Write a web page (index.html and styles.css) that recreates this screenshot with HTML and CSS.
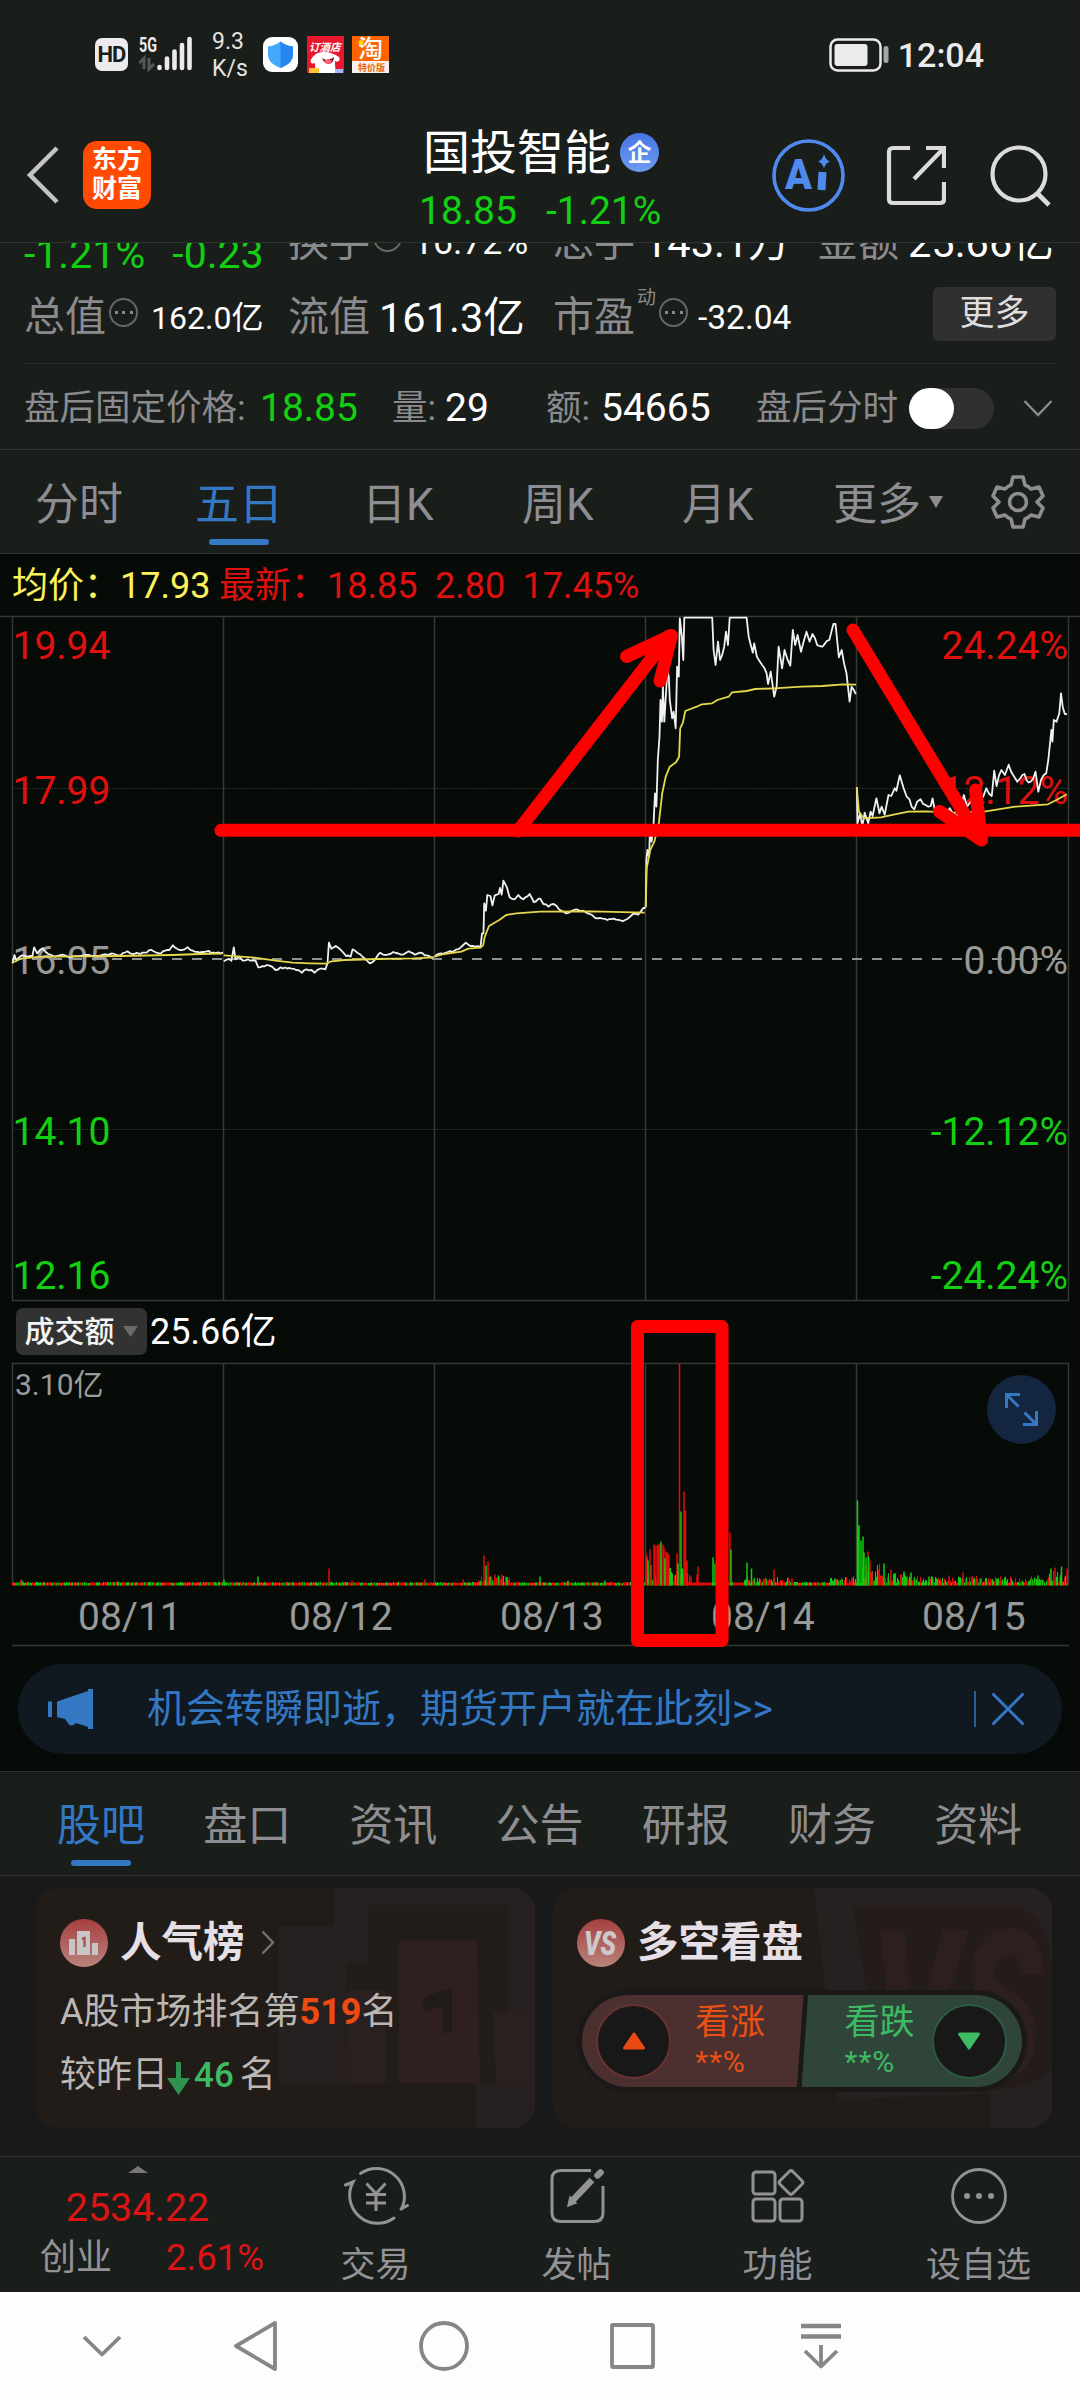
FILE: index.html
```html
<!DOCTYPE html>
<html lang="zh-CN">
<head>
<meta charset="utf-8">
<title>国投智能</title>
<link rel="stylesheet" href="styles.css">
</head>
<body>
<div class="screen">

  <header class="status">
    <div class="status-left">
      <span class="hd">HD</span>
      <svg class="signal" width="54" height="36" viewBox="0 0 54 36">
        <text x="0" y="15.500" class="signal-text" textLength="18" lengthAdjust="spacingAndGlyphs">5G</text>
        <path d="M0 27l5-5v11M15 28l-5 5V22" fill="none" stroke="#555856" stroke-width="3"/>
        <path d="M20.500 32v-1M28 32V22.500M35.500 32V15.500M43 32V9M50.500 32V3" stroke="#eceaed" stroke-width="4.600" stroke-linecap="round"/>
      </svg>
      <span class="speed">9.3<br>K/s</span>
      <svg class="app-shield" width="35" height="35" viewBox="0 0 35 35">
        <rect width="35" height="35" rx="9" fill="#fff"/>
        <path d="M17.500 4.500c4 3 8 4.500 12.500 5v8c0 7-6 11-12.500 13.500C11 28.500 5 24.500 5 17.500v-8c4.500-.5 8.500-2 12.500-5z" fill="#43a9fb"/>
        <path d="M17.500 4.500c4 3 8 4.500 12.500 5v8c0 7-6 11-12.500 13.500z" fill="#2587f0"/>
      </svg>
      <svg class="app-hotel" width="37" height="37" viewBox="0 0 37 37">
        <rect width="37" height="37" fill="#e8172c"/>
        <text x="2" y="15" font-size="10.500" font-weight="700" font-style="italic" fill="#fff">订酒店</text>
        <path d="M7 37c2-5 1-7 1-10-4 2-6-2-3-5 3-4 6-6 12-6s11 2 15 5c2 3-1 6-4 4 0 5 0 8 2 12z" fill="#fff"/>
        <path d="M15 22c4 3 8 2 12-1 0 8-9 10-12 1z" fill="#8d1220"/>
        <path d="M17 25c3-2 6-2 8 0-2 4-6 4-8 0z" fill="#ff6470"/>
        <rect x="2" y="32" width="10" height="5" fill="#ffc533"/><rect x="28" y="33" width="8" height="4" fill="#a8b6ff"/>
      </svg>
      <svg class="app-tao" width="37" height="37" viewBox="0 0 37 37">
        <rect width="37" height="26" fill="#ff6400"/><rect y="25" width="37" height="12" fill="#f6f1ea"/>
        <text x="6" y="22" font-size="25" font-weight="500" fill="#fff">淘</text>
        <circle cx="9" cy="6.500" r="2.500" fill="#ffd800"/>
        <text x="6" y="34.500" font-size="9" font-weight="700" fill="#e8640f">特价版</text>
      </svg>
    </div>
    <div class="status-right">
      <svg width="60" height="34" viewBox="0 0 60 34">
        <rect x="1.500" y="1.500" width="50" height="31" rx="7" fill="none" stroke="#eceaed" stroke-width="2.500"/>
        <rect x="5.500" y="6" width="33" height="22" rx="3" fill="#eceaed"/>
        <rect x="54.500" y="8" width="5" height="17" rx="2.500" fill="#a5a6a6"/>
      </svg>
      <span class="time">12:04</span>
    </div>
  </header>

  <nav class="topbar">
    <svg class="back" width="34" height="58" viewBox="0 0 34 58"><path d="M31 2L4 29l27 27" fill="none" stroke="#c4c4c4" stroke-width="4.500"/></svg>
    <div class="brand">东方<br>财富</div>
    <div class="title">
      <div class="name">国投智能<span class="corp">企</span></div>
      <div class="quote"><span>18.85</span><span>-1.21%</span></div>
    </div>
    <div class="actions">
      <svg width="73" height="73" viewBox="0 0 73 73">
        <circle cx="36.500" cy="36.500" r="34.500" fill="none" stroke="#4f8bef" stroke-width="3.600"/>
        <text x="13" y="50" class="ai-text" textLength="27" lengthAdjust="spacingAndGlyphs">A</text>
        <path d="M50.500 33L49.500 51" stroke="#4f8bef" stroke-width="8"/>
        <path d="M52 15q1.500 6 6 7.500-4.500 1.500-6 7-1.500-5.500-6-7 4.500-1.500 6-7.500z" fill="#4f8bef"/>
      </svg>
      <svg class="share" width="60" height="62" viewBox="0 0 60 62">
        <path d="M24 3H7Q3 3 3 7v47q0 4 4 4h47q4 0 4-4V37M40 3h18v20M57 4L28 34" fill="none" stroke="#dcdcdc" stroke-width="4.200"/>
      </svg>
      <svg width="62" height="62" viewBox="0 0 62 62">
        <circle cx="29" cy="29" r="26.500" fill="none" stroke="#dcdcdc" stroke-width="4.200"/>
        <path d="M47 48l12 12" stroke="#dcdcdc" stroke-width="4.600"/>
      </svg>
    </div>
  </nav>

  <section class="stats">
    <div class="stats-clip">
      <div class="stat-row">
        <div class="stat drop"><span class="n41">-1.21%</span><span class="n41">-0.23</span></div>
        <div class="stat"><label>换手</label><i class="dots"></i><span class="n36">16.72%</span></div>
        <div class="stat wide"><label>总手</label><span class="n42">143.1万</span></div>
        <div class="stat"><label>金额</label><span class="n42">25.66亿</span></div>
      </div>
      <div class="stat-row second">
        <div class="stat"><label>总值</label><i class="dots"></i><span class="n32">162.0亿</span></div>
        <div class="stat"><label>流值</label><span class="n42">161.3亿</span></div>
        <div class="stat pe"><label>市盈</label><sup>动</sup><i class="dots"></i><span class="n33">-32.04</span></div>
        <button class="more">更多</button>
      </div>
    </div>
    <div class="after">
      <span class="lbl">盘后固定价格:</span><span class="val green">18.85</span>
      <span class="lbl">量:</span><span class="val">29</span>
      <span class="lbl">额:</span><span class="val">54665</span>
      <span class="lbl">盘后分时</span>
      <span class="toggle"><b></b></span>
      <svg width="30" height="20" viewBox="0 0 30 20"><path d="M1.500 2L15 16 28.500 2" fill="none" stroke="#8b8b8f" stroke-width="2.400"/></svg>
    </div>
  </section>

  <nav class="periods">
    <span>分时</span><span class="on">五日</span><span>日K</span><span>周K</span><span>月K</span>
    <span class="more-k">更多<i></i></span>
    <svg width="54" height="56" viewBox="-27 -28 54 56"><path d="M-5-25H5L7-17Q10-16 13-13L21-15 25-6 19 0 25 6 21 15 13 13Q10 16 7 17L5 25H-5L-7 17Q-10 16-13 13L-21 15-25 6-19 0-25-6-21-15-13-13Q-10-16-7-17Z" fill="none" stroke="#8e8e92" stroke-width="3.600" stroke-linejoin="round"/><circle r="8.500" fill="none" stroke="#8e8e92" stroke-width="3.600"/></svg>
  </nav>

  <section class="chart-area">
    <svg id="chart" width="1080" height="1096" viewBox="0 554 1080 1096">
      <g class="legend">
        <text x="12" y="598" fill="#fdf25a">均价：17.93</text>
        <text x="219" y="598" fill="#e0100f">最新：</text>
        <text x="327" y="598" fill="#e0100f">18.85</text>
        <text x="435" y="598" fill="#e0100f">2.80</text>
        <text x="522.500" y="598" fill="#e0100f">17.45%</text>
      </g>
      <g stroke="#363a37" stroke-width="1.500">
        <path d="M0 616.500H1080M12 1300.500H1069M12 1363.500H1069M12 1645.500H1069"/>
        <path d="M12.500 616V1300M223.500 616V1300M434.500 616V1300M645.500 616V1300M856.500 616V1300M1068.500 616V1300"/>
        <path d="M12.500 1363V1585M223.500 1363V1585M434.500 1363V1585M645.500 1363V1585M856.500 1363V1585M1068.500 1363V1585"/>
        <path d="M12 788.500H1069M12 1129.500H1069" stroke-width="1" stroke-dasharray="1 1.500" stroke="#444845"/>
      </g>
      <path d="M12 959H1066" stroke="#929292" stroke-width="1.800" stroke-dasharray="10 10"/>
      <g class="axis">
        <text x="12.500" y="659" class="up">19.94</text><text x="12.500" y="804" class="up">17.99</text>
        <text x="12.500" y="973.500">16.05</text>
        <text x="12.500" y="1145" class="down">14.10</text><text x="12.500" y="1289" class="down">12.16</text>
        <g text-anchor="end">
          <text x="1068" y="659" class="up">24.24%</text><text x="1068" y="804" class="up">12.12%</text>
          <text x="1068" y="973.500">0.00%</text>
          <text x="1068" y="1145" class="down">-12.12%</text><text x="1068" y="1289" class="down">-24.24%</text>
        </g>
      </g>
      <g id="lines" fill="none" stroke-linejoin="round"></g>
      <g id="volume"></g>
      <g>
        <rect x="16" y="1308" width="131" height="47" rx="7" fill="#323232"/>
        <text x="24.500" y="1342" font-size="30" font-weight="500" fill="#f4f4f4">成交额</text>
        <path d="M123 1326h15l-7.500 11z" fill="#6a6a6a"/>
        <text x="150" y="1344" font-size="36" fill="#fff">25.66亿</text>
        <text x="15" y="1395" font-size="30" fill="#9b9b9b">3.10亿</text>
      </g>
      <g class="dates">
        <text x="78" y="1630">08/11</text><text x="289" y="1630">08/12</text><text x="500" y="1630">08/13</text><text x="711" y="1630">08/14</text><text x="922" y="1630">08/15</text>
      </g>
      <circle cx="1021.500" cy="1409.500" r="34.500" fill="#13253f"/>
      <path d="M1020 1394.500H1006.500V1408M1006.500 1394.500L1018.500 1406.500M1036.500 1411V1424.500H1023M1036.500 1424.500L1024.500 1412.500" fill="none" stroke="#3478c4" stroke-width="3"/>
      <g fill="none" stroke="#fe0000" stroke-width="13" stroke-linecap="round" stroke-linejoin="round">
        <path d="M221 830.300H1090"/>
        <path d="M518 831L669 636"/>
        <path d="M626.500 656.500L671.500 635.500 660 681"/>
        <path d="M853 630L977 835"/>
        <path d="M939.500 811.500L981.500 840 975.500 790"/>
        <rect x="637.500" y="1326.500" width="84.500" height="314"/>
      </g>
    </svg>
    <div class="promo">
      <svg width="46" height="40" viewBox="0 0 46 40"><path d="M0 12.500h4V28H0zM9 12.500L40 2V0h5v40h-5v-2l-12-4q-3 4-7 1.500L17 30l-8-2z" fill="#3478c4"/></svg>
      <span>机会转瞬即逝，期货开户就在此刻&gt;&gt;</span>
      <i></i>
      <svg width="34" height="34" viewBox="0 0 34 34"><path d="M1.500 1.500l31 31M32.500 1.500l-31 31" stroke="#3478c4" stroke-width="3"/></svg>
    </div>
  </section>

  <nav class="tabs">
    <span class="on">股吧</span><span>盘口</span><span>资讯</span><span>公告</span><span>研报</span><span>财务</span><span>资料</span>
  </nav>

  <section class="cards">
    <article class="card">
      <svg class="ghost" width="499" height="240" viewBox="0 0 499 240">
        <path d="M298 0H499V240H440V195H243V38H298Z" fill="#272020"/>
        <path d="M332 17H473V195H310V75H332Z" fill="#231d19"/>
        <path d="M363 53H441L444 195H363Z" fill="#2f1f1f"/>
        <path d="M312 102H350V195H310ZM457 124H491V195H460Z" fill="#2a2020"/>
        <path d="M387 110L416 99V145H406V118L388 124Z" fill="#211b19"/>
      </svg>
      <h3>
        <svg width="48" height="48" viewBox="0 0 48 48"><defs><linearGradient id="r" x2="0" y2="1"><stop stop-color="#a64040"/><stop offset="1" stop-color="#b9837c"/></linearGradient></defs><circle cx="24" cy="24" r="24" fill="url(#r)"/><path d="M9 20h6v16H9zM17 12h13v24H17zM32 24h6v12h-6z" fill="#c9c5c5"/><path d="M22 20l2.500-1v9" fill="none" stroke="#a85450" stroke-width="2.500"/></svg>
        <span>人气榜</span>
        <svg class="chev" width="14" height="25" viewBox="0 0 14 25"><path d="M1.500 1.500L12 12.500 1.500 23.500" fill="none" stroke="#77716d" stroke-width="2.400"/></svg>
      </h3>
      <p>A股市场排名第<b>519</b>名</p>
      <p class="p2">较昨日<svg width="23" height="34" viewBox="0 0 23 34"><path d="M11.500 1v22" stroke="#2f9350" stroke-width="5"/><path d="M0 17h23L11.500 34z" fill="#2f9350"/></svg><em>46</em>名</p>
    </article>
    <article class="card">
      <svg class="ghost" width="499" height="240" viewBox="0 0 499 240">
        <path d="M261 0H499V240H438V205L285 212Z" fill="#272020"/>
        <path d="M300 18H450Q499 18 499 90V180Q480 202 430 202H330Z" fill="#231c1a"/>
        <text x="318" y="190" font-size="208" font-weight="900" font-style="italic" textLength="172" lengthAdjust="spacingAndGlyphs" fill="#2e1f1f">VS</text>
      </svg>
      <h3>
        <svg width="48" height="48" viewBox="0 0 48 48"><circle cx="24" cy="24" r="24" fill="url(#r)"/><text x="7" y="36" font-size="33" font-weight="900" font-style="italic" textLength="32" lengthAdjust="spacingAndGlyphs" fill="#cdc9ca">VS</text></svg>
        <span>多空看盘</span>
      </h3>
      <div class="vote">
        <div class="bull"><span class="knob"><svg width="24" height="20" viewBox="0 0 24 20"><path d="M12 3L21.500 17H2.500Z" fill="#ea4a12" stroke="#ea4a12" stroke-width="3" stroke-linejoin="round"/></svg></span><div>看涨<small>**%</small></div></div>
        <div class="bear"><div>看跌<small>**%</small></div><span class="knob"><svg width="24" height="20" viewBox="0 0 24 20"><path d="M12 17L21.500 3H2.500Z" fill="#3dbb62" stroke="#3dbb62" stroke-width="3" stroke-linejoin="round"/></svg></span></div>
      </div>
    </article>
  </section>

  <footer class="dock">
    <div class="index">
      <i></i>
      <strong>2534.22</strong>
      <div><span>创业</span><em>2.61%</em></div>
    </div>
    <div class="item">
      <svg width="68" height="60" viewBox="0 0 68 60"><g fill="none" stroke="#929297" stroke-width="3" stroke-linecap="round"><path d="M18.500 7.500A28 28 0 0 1 59.500 43M52 52A28 28 0 0 1 11 16L3.500 19M59 43L65.500 39.500"/><path d="M24.500 17.500L34 27.500 43.500 17.500M24 28.500H44M24 37H44M34 28V45" stroke-linecap="butt"/></g></svg>
      <span>交易</span>
    </div>
    <div class="item">
      <svg width="60" height="60" viewBox="0 0 60 60"><path d="M44 4.500H14Q5 4.500 5 13V47Q5 55.500 14 55.500H47Q56 55.500 56 47V20" fill="none" stroke="#929297" stroke-width="3"/><path d="M26 34L45 14" stroke="#929297" stroke-width="6.500"/><path d="M21 40l2-9 6 6z" fill="#929297" stroke="#929297" stroke-width="1.500"/><path d="M50.500 9.500l3-3" stroke="#929297" stroke-width="6.500" stroke-linecap="round"/></svg>
      <span>发帖</span>
    </div>
    <div class="item">
      <svg width="60" height="60" viewBox="0 0 60 60"><g fill="none" stroke="#929297" stroke-width="3"><rect x="5" y="6" width="22" height="22" rx="3"/><rect x="5" y="33" width="22" height="22" rx="3"/><rect x="32" y="33" width="22" height="22" rx="3"/><rect x="34" y="7.500" width="18" height="18" rx="2.500" transform="rotate(45 43 16.500)"/></g></svg>
      <span>功能</span>
    </div>
    <div class="item">
      <svg width="60" height="60" viewBox="0 0 60 60"><circle cx="30" cy="30" r="26.500" fill="none" stroke="#929297" stroke-width="2.800"/><g fill="#929297"><circle cx="18" cy="30" r="3"/><circle cx="30" cy="30" r="3"/><circle cx="42" cy="30" r="3"/></g></svg>
      <span>设自选</span>
    </div>
  </footer>

  <footer class="sysnav">
    <svg width="1080" height="108" viewBox="0 2292 1080 108" fill="none" stroke="#868686" stroke-width="3.800" stroke-linejoin="round">
      <path d="M84 2337L102 2354.500 120 2337"/>
      <path d="M275 2323V2369L236 2346Z"/>
      <circle cx="444" cy="2346" r="23"/>
      <rect x="612" y="2325" width="41" height="42" rx="1"/>
      <path d="M801 2326H841M801 2336.500H841" stroke-width="4.500"/><path d="M821 2345V2366M805 2351L821 2366.500 837 2351"/>
    </svg>
  </footer>
</div>
<script src="chart.js"></script>
</body>
</html>
```
FILE: styles.css
```css
* { box-sizing: border-box; }
body { margin: 0; background: #1a1e1b; }
.screen {
  width: 1080px; height: 2400px; overflow: hidden;
  display: flex; flex-direction: column;
  font-family: Roboto, "Noto Sans CJK SC", sans-serif;
  line-height: 1; white-space: nowrap; color: #fff;
}
.screen > * { flex: none; }
svg { display: block; flex: none; }
svg text { font-family: Roboto, "Noto Sans CJK SC", sans-serif; }
i, em { font-style: normal; }

.status { height: 108px; display: flex; justify-content: space-between; padding: 0 96px 0 95px; }
.status-left, .status-right { display: flex; align-items: center; }
.hd { width: 33px; height: 33px; border-radius: 7px; background: #eceaed; color: #1a1e1b; font-size: 22px; line-height: 34px; font-weight: 700; text-align: center; letter-spacing: -1px; }
.signal { margin-left: 11px; }
.signal-text { font-size: 20px; font-weight: 700; fill: #eceaed; }
.speed { margin-left: 19px; width: 50px; font-size: 23px; line-height: 27.5px; color: #e4e4e4; margin-top: 2px; }
.app-shield { margin-left: 1px; }
.app-hotel { margin-left: 9px; }
.app-tao { margin-left: 8px; }
.status-right { gap: 9px; padding-top: 1px; }
.time { font-size: 34px; font-weight: 500; color: #eceaed; }

.topbar { height: 135px; border-bottom: 1.5px solid #2f3330; display: flex; align-items: flex-start; padding-left: 26px; }
.back { margin-top: 38px; }
.brand { width: 68px; height: 68px; margin: 33px 0 0 23px; border-radius: 14px; background: #fe4a02; font-size: 25px; line-height: 29px; padding-top: 4px; font-weight: 700; text-align: center; }
.title { width: 250px; margin-left: 267px; padding-top: 19px; }
.name { display: flex; align-items: center; font-size: 47px; line-height: 52px; padding-left: 5px; }
.corp { width: 39px; height: 39px; margin: -2px 0 0 9px; border-radius: 50%; background: linear-gradient(#4773e4, #6e9df0); font-size: 24px; line-height: 40px; font-weight: 700; text-align: center; }
.quote { display: flex; gap: 29px; margin: 11px 0 0 1px; font-size: 39px; line-height: 42px; color: #12cf12; }
.actions { display: flex; align-items: center; margin: 31px 0 0 104px; }
.share { margin-left: 41px; }
.share + svg { margin-left: 44px; }

.stats { height: 207px; border-bottom: 1.5px solid #2f3330; }
.stats-clip { height: 121px; margin: 0 24px; overflow: hidden; border-bottom: 1.5px solid #2a2e2b; }
.stat-row { height: 75px; margin-top: -38px; display: grid; grid-template-columns: 264px 265px 264px 239px; align-items: center; }
.stat-row.second { margin-top: 0; }
.stat { display: flex; align-items: center; }
.stat label { font-size: 41px; color: #8b8b8f; }
.drop { gap: 27px; padding-top: 24px; color: #12cf12; }
.dots { width: 29px; height: 29px; margin: -10px 0 0 3px; border: 2px solid #63676a; border-radius: 50%; background: radial-gradient(circle, #8b8b8f 1.5px, transparent 2px) center / 7px 29px no-repeat, radial-gradient(circle, #8b8b8f 1.5px, transparent 2px) 2px center / 7px 29px no-repeat, radial-gradient(circle, #8b8b8f 1.5px, transparent 2px) 17px center / 7px 29px no-repeat; }
.dots + span { margin-left: 13px; }
.dots + .n36 { margin-left: 11px; }
label + .n42 { margin-left: 9px; }
.n32 { font-size: 32px; } .n33 { font-size: 33.5px; } .n36 { font-size: 35.5px; } .n41 { font-size: 41px; } .n42 { font-size: 41.5px; }
.pe sup { font-size: 19px; color: #8b8b8f; margin: -40px 0 0 2px; line-height: 19px; }
.pe .dots + span { margin-left: 10px; }
.more { width: 123px; height: 54px; margin: -8px 0 0 116px; border: 0; border-radius: 6px; background: #303030; color: #dedede; font: 35px/54px Roboto, "Noto Sans CJK SC", sans-serif; padding: 0; }
.after { height: 85px; display: grid; grid-template-columns: 236px 132px 53px 101px 55px 155px 153px 114px 30px; padding: 4px 0 0 24px; align-items: center; }
.lbl { font-size: 35.5px; color: #8b8b8f; }
.val { font-size: 39px; }
.green { color: #12cf12; }
.toggle { width: 85px; height: 41px; border-radius: 21px; background: #303030; }
.toggle b { display: block; width: 45px; height: 41px; border-radius: 21px; background: #fff; }

.periods { height: 104px; border-bottom: 1.5px solid #2f3330; display: grid; grid-template-columns: 160px 167px 160px 160px 151px 158px 54px; padding-left: 35px; color: #8e8e92; font-size: 44px; align-items: center; }
.periods .on, .tabs .on { color: #3478c4; position: relative; }
.periods .on::after, .tabs .on::after { content: ""; position: absolute; left: 14px; top: 56px; width: 60px; height: 6px; border-radius: 3px; background: #3478c4; }
.periods span { padding-top: 6px; }
.periods .on::after { top: 62px; }
.more-k { display: flex; align-items: center; }
.more-k i { border: 7px solid transparent; border-top: 12px solid #8e8e92; border-bottom: 0; margin: -6px 0 0 8px; }

.chart-area { height: 1217px; background: #070b08; }
.legend text { font-size: 36px; }
.axis text { font-size: 39px; fill: #989898; }
.axis .up { fill: #e0100f; }
.axis .down { fill: #12cf12; }
.dates text { font-size: 39px; fill: #999; }
.signal-text, .ai-text { font-family: Roboto, sans-serif; }
.ai-text { font-size: 43px; font-weight: 900; fill: #4f8bef; }
.promo { width: 1044px; height: 90px; margin: 14px 0 0 18px; border-radius: 45px; background: #101820; display: flex; align-items: center; padding-left: 30px; color: #3478c4; font-size: 39px; }
.promo span { width: 827px; margin-left: 53px; }
.promo i { width: 1.5px; height: 36px; margin: 0 15px 0 0; background: #2c5f98; }

.tabs { height: 105px; border: solid #2f3330; border-width: 1.5px 0; display: grid; grid-template-columns: repeat(7, 146.2px); padding: 5px 0 0 57px; align-items: center; color: #8e8e92; font-size: 44px; }

.cards { height: 280px; background: #191919; display: flex; gap: 18px; padding: 12px 0 0 36px; }
.card { position: relative; flex: none; width: 499px; height: 240px; border-radius: 22px; overflow: hidden; background: #221c18; padding: 30px 0 0 24px; }
.ghost { position: absolute; left: 0; top: 0; }
.card h3, .card p, .vote { position: relative; margin: 0; }
.card h3 { display: flex; align-items: center; height: 48px; font-size: 41.5px; font-weight: 700; color: #e6e0e6; padding-top: 1px; }
.card h3 span { margin-left: 12px; }
.chev { margin-left: 16px; }
.card p { display: flex; align-items: center; height: 36px; margin-top: 28px; font-size: 36px; color: #bbb7b5; }
.card p.p2 { margin-top: 27px; }
.card p b { color: #ee4b13; }
.card p em { color: #3dbb62; font-weight: 500; margin: 0 6px 0 4px; font-size: 35px; }
.p2 svg { margin: 6px 0 0 -1px; }
.vote { width: 450px; height: 102px; margin-top: 24px; border: 5px solid #1b1918; border-radius: 51px; background: #1b1918; display: flex; overflow: hidden; font-size: 35px; }
.vote > div { display: flex; align-items: center; height: 92px; }
.bull { width: 222px; background: #4b302f; color: #ea5014; clip-path: polygon(0 0, 100% 0, 97% 100%, 0 100%); padding-left: 14px; }
.bear { width: 221px; margin-left: -2px; background: #30453a; color: #3dbb62; clip-path: polygon(3% 0, 100% 0, 100% 100%, 0 100%); }
.bull .knob { margin-right: 24px; }
.bear > div { margin: 0 17px 0 43px; }
.vote small { display: block; font-size: 30px; letter-spacing: 1px; margin-top: 7px; }
.knob { width: 75px; height: 75px; border-radius: 50%; background: #181818; border: 2px solid #663330; display: flex; align-items: center; justify-content: center; flex: none; }
.bear .knob { border-color: #2c5a40; }

.dock { height: 136px; border-top: 1.5px solid #33302f; display: grid; grid-template-columns: 275px repeat(4, 201px); color: #929297; font-size: 35px; }
.index { display: flex; flex-direction: column; align-items: center; padding-top: 9px; color: #dd1413; }
.index i { border: 10.500px solid transparent; border-top: 0; border-bottom: 7px solid #77777b; }
.index strong { font-size: 39.5px; font-weight: 400; margin-top: 15px; }
.index div { display: flex; gap: 54px; margin: 12px 0 0 29px; font-size: 36px; align-items: center; }
.index em { font-size: 36.5px; }
.index span { color: #929297; }
.item { display: flex; flex-direction: column; align-items: center; padding-top: 9px; }
.item span { margin-top: 22px; }

.sysnav { height: 108px; background: #fdfdfd; }
```
FILE: chart.js
```js
var NS = 'http://www.w3.org/2000/svg';
var seed = 11;
function rnd() { seed = (seed * 16807) % 2147483647; return seed / 2147483647; }

// Adds minute-level movement between the sampled prices.
function densify(pts, step, amp) {
  var out = [pts[0]];
  for (var i = 1; i < pts.length; i++) {
    var a = pts[i - 1], b = pts[i];
    var n = Math.max(1, Math.floor((b[0] - a[0]) / step));
    var still = a[1] === b[1] && a[1] < 620;
    for (var k = 1; k < n && !still; k++) {
      var t = k / n;
      out.push([a[0] + (b[0] - a[0]) * t, a[1] + (b[1] - a[1]) * t + (rnd() - .5) * amp]);
    }
    out.push(b);
  }
  return out;
}
function parse(s, ox) {
  return s.trim().split(/\s+/).map(function (p) {
    var c = p.split(',');
    return [ox + c[0] / 2.904, 540 + c[1] / 3];
  });
}
function line(pts, color, w) {
  var p = document.createElementNS(NS, 'path');
  p.setAttribute('d', 'M' + pts.map(function (q) { return q[0].toFixed(1) + ' ' + q[1].toFixed(1); }).join('L'));
  p.setAttribute('stroke', color);
  p.setAttribute('stroke-width', w);
  document.getElementById('lines').appendChild(p);
}

var price = [
  ['36,1270 42,1245 48,1262 64,1246 80,1250 94,1248 99,1222 108,1240 124,1225 140,1242 160,1250 180,1244 200,1252 240,1246 280,1248 320,1242 350,1246 370,1234 385,1242 420,1238 440,1230 462,1240 480,1232 492,1230 502,1216 514,1226 530,1230 545,1222 560,1232 580,1238 600,1234 620,1238 648,1238', 0, 5],
  ['650,1264 660,1258 672,1262 679,1222 684,1258 695,1250 705,1262 720,1258 742,1262 750,1282 775,1275 790,1280 800,1290 815,1282 840,1284 860,1290 877,1298 890,1288 905,1290 914,1298 930,1286 945,1288 951,1270 955,1208 962,1226 975,1218 990,1230 1005,1248 1018,1250 1024,1228 1040,1240 1060,1256 1074,1270 1090,1258 1104,1238 1125,1244 1142,1236 1165,1244 1187,1234 1205,1244 1220,1238 1240,1246 1258,1252', 0, 6],
  ['1262,1250 1280,1240 1300,1236 1320,1232 1338,1222 1353,1208 1366,1218 1380,1220 1395,1222 1400,1180 1404,1180 1406,1090 1411,1112 1415,1065 1424,1068 1430,1096 1437,1066 1448,1062 1452,1044 1457,1064 1462,1022 1472,1042 1480,1072 1495,1078 1505,1065 1520,1078 1538,1062 1550,1086 1568,1075', 0, 6],
  ['0,1075 10,1092 25,1100 40,1092 55,1108 75,1120 90,1114 105,1108 125,1112 145,1122 160,1134 175,1134 195,1140 215,1136 240,1144 255,1136 270,1122 285,1124 300,1104 306,1104', 540, 6],
  ['307,1102 309,960 312,930 317,950 319,880 324,905 330,850 334,760 338,800 342,660 347,590 350,480 354,545 357,440 361,545 366,460 370,390 374,410 377,480 384,535 388,515 394,565 398,380 403,410 406,235 412,290 416,360 419,233 500,233 504,330 510,375 517,305 523,360 535,320 540,275 546,315 551,233 600,233 606,290 618,338 622,310 630,350 645,375 658,400 662,432 670,395 680,470 687,440 693,320 703,385 710,330 727,377 734,270 741,315 748,285 758,335 774,275 783,305 791,282 805,315 820,320 840,300 852,252 858,252 868,352 876,330 890,400 899,485 905,440 917,462', 540, 14],
  ['920,742 922,850 930,820 936,860 943,818 953,850 960,815 966,828 977,775 986,820 992,800 1001,824 1012,765 1020,768 1030,745 1035,752 1045,706 1055,742 1065,770 1087,808 1095,785 1105,778 1120,795 1135,798 1140,775 1146,808 1165,815 1190,805 1210,830 1225,790 1231,765 1240,800 1262,770 1287,770 1296,745 1312,768 1319,692 1326,738 1340,690 1350,705 1361,674 1374,705 1386,725 1401,705 1425,725 1439,695 1447,755 1455,720 1470,700 1476,660 1485,570 1488,605 1492,540 1500,545 1508,520 1513,460 1518,500 1524,522 1530,522', 540, 16]
];
var average = [
  ['36,1268 60,1256 120,1250 200,1250 350,1248 500,1245 580,1242 645,1241', 0],
  ['650,1246 700,1250 740,1253 800,1262 850,1268 900,1270 948,1271 962,1264 1000,1260 1100,1257 1200,1255 1260,1252', 0],
  ['1262,1250 1290,1242 1340,1235 1360,1226 1395,1223 1403,1216 1408,1190 1420,1158 1450,1140 1470,1125 1500,1120 1568,1115', 0],
  ['0,1115 150,1114 304,1118', 540],
  ['307,1102 310,985 320,930 332,905 345,850 355,760 365,710 377,680 395,667 404,650 407,565 415,548 422,513 455,500 470,493 500,490 515,480 548,470 558,457 600,453 625,447 680,445 760,440 820,438 880,433 918,434', 540],
  ['920,742 926,815 940,835 990,832 1030,823 1070,815 1120,814 1200,818 1290,815 1380,800 1475,793 1500,780 1530,763', 540]
];
price.forEach(function (p) { line(densify(parse(p[0], p[1]), 2, p[2] / 3), '#f2f2f2', 1.8); });
average.forEach(function (a) { line(parse(a[0], a[1]), '#e6d84c', 1.8); });

// Turnover bars: a quiet floor, then the busy minutes listed as [x, height].
var RED = '#e00b0b', GREEN = '#10cc10', base = 1585.5;
function bars(list, color, width) {
  var p = document.createElementNS(NS, 'path');
  p.setAttribute('d', list.map(function (b) { return 'M' + b[0].toFixed(1) + ' ' + base + 'v-' + b[1].toFixed(1); }).join(''));
  p.setAttribute('stroke', color);
  p.setAttribute('stroke-width', width);
  document.getElementById('volume').appendChild(p);
}
function level(x) {
  if (x > 478 && x < 510) return 8;
  if (x > 645 && x < 672) return 28;
  if (x > 672 && x < 690) return 12;
  if (x > 743 && x < 790) return 6;
  if (x > 830 && x < 856) return 7;
  if (x > 862 && x < 880) return 20;
  if (x > 880 && x < 915) return 10;
  if (x > 1048) return 14;
  if (x > 915) return 7;
  return 1.2;
}
var floorRed = [], floorGreen = [];
for (var x = 12.5; x < 1068; x += 1) {
  var sealed = x > 690 && x < 711 || x > 733 && x < 744;
  var h = sealed ? 3 : 2.4 + rnd() * level(x);
  var green = x > 856 && x < 862 || !sealed && rnd() > .52;
  (green ? floorGreen : floorRed).push([x, h]);
}
var peaksRed = [[329, 17], [21, 6], [352, 5], [425, 6], [463, 6], [484, 30], [488, 24], [495, 11], [502, 11], [646, 32], [650, 36], [654, 41], [655, 40], [657, 40], [658.5, 41], [660, 42], [663, 41], [664, 38], [666, 34], [667.5, 33], [669, 31], [677, 32], [679.5, 222], [684, 94], [685.5, 75], [687, 25], [691, 9], [698, 19], [697, 11], [730, 53], [774, 16], [792, 7], [868, 34], [870, 25], [872, 14], [891, 16], [963, 13], [949, 10], [1067, 17], [1055, 18]];
var peaksGreen = [[22, 5], [118, 4], [224, 6], [258, 9], [486, 20], [490, 9], [540, 9], [568, 5], [605, 5], [648, 25], [661, 44], [665, 27], [670, 17], [678, 22], [681, 74], [682.5, 17], [713, 28], [715, 22], [731, 36], [747, 23], [751.5, 17], [857.5, 85], [859, 60], [861, 45], [863, 49], [864, 33], [866, 28], [868.5, 29], [884, 22], [904, 14], [911, 13], [929, 9], [1038, 10], [1051, 17], [1061.5, 19]];
bars(floorGreen, GREEN, 1.1);
bars(floorRed, RED, 1.1);
bars(peaksRed, RED, 1.5);
bars(peaksGreen, GREEN, 1.5);
```
